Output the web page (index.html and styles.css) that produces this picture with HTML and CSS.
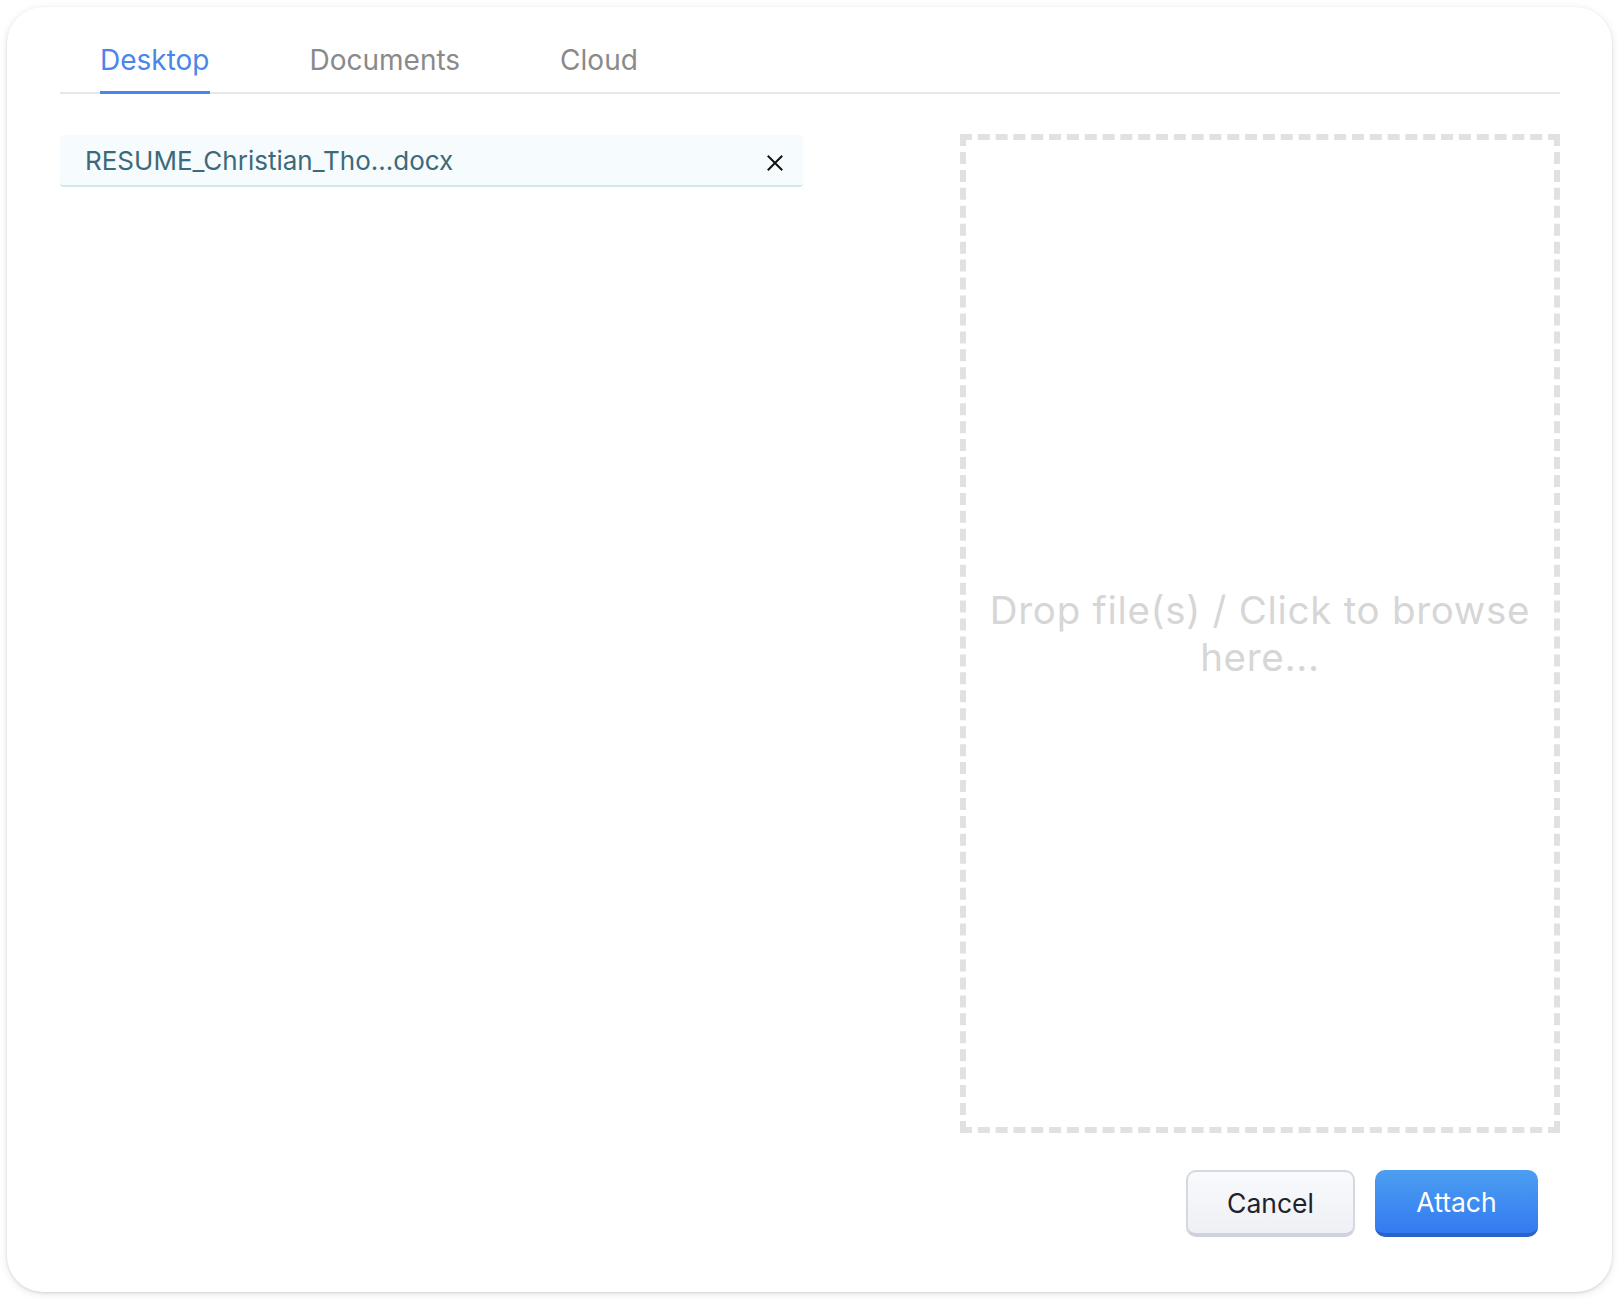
FILE: index.html
```html
<!DOCTYPE html>
<html lang="en">
<head>
<meta charset="utf-8">
<title>Attach files</title>
<link rel="stylesheet" href="styles.css">
</head>
<body>
<div class="dialog">
  <div class="tabs">
    <div class="tab active">Desktop</div>
    <div class="tab">Documents</div>
    <div class="tab">Cloud</div>
  </div>
  <div class="content">
    <div class="files">
      <div class="file">
        <span class="file-name">RESUME_Christian_Tho...docx</span>
        <svg class="file-remove" width="16" height="16" viewBox="0 0 16 16"><path d="M1.5 1.5 L14.5 14.5 M14.5 1.5 L1.5 14.5" stroke="#111" stroke-width="2" stroke-linecap="square" fill="none"/></svg>
      </div>
    </div>
    <div class="dropzone">
      <div class="drop-text">Drop file(s) / Click to browse here...</div>
    </div>
  </div>
  <div class="actions">
    <button class="btn btn-cancel">Cancel</button>
    <button class="btn btn-attach">Attach</button>
  </div>
</div>
</body>
</html>
```
FILE: styles.css
```css
html, body {
  margin: 0;
  padding: 0;
  background: #ffffff;
}
body {
  font-family: Inter, "Noto Sans", "Liberation Sans", sans-serif;
}
.dialog {
  box-sizing: border-box;
  margin: 7px;
  width: 1605px;
  height: 1285px;
  padding: 36px 52px 55px 53px;
  background: #fff;
  border-radius: 36px;
  box-shadow: 0 1px 3px rgba(0,0,0,0.12), 0 2px 10px rgba(0,0,0,0.09);
  display: flex;
  flex-direction: column;
}
.tabs {
  display: flex;
  gap: 100px;
  padding-left: 40px;
  border-bottom: 2px solid #e7e7e7;
}
.tab {
  font-size: 28px;
  line-height: 34px;
  color: #8a8a8a;
  padding-bottom: 14px;
  border-bottom: 3px solid transparent;
  margin-bottom: -2px;
}
.tab.active {
  color: #4a86e8;
  border-bottom-color: #4a86e8;
}
.content {
  flex: 1;
  display: flex;
  justify-content: space-between;
  margin-top: 40px;
  min-height: 0;
}
.files {
  width: 743px;
  padding-top: 1px;
}
.file {
  display: flex;
  align-items: center;
  justify-content: space-between;
  height: 50px;
  padding: 0 20px 0 25px;
  background: #f6fcfd;
  border-bottom: 2px solid #d4e6ea;
  border-radius: 4px;
}
.file-name {
  font-size: 26px;
  color: #3d6a7b;
}
.file-remove {
  display: block;
  margin-top: 5px;
}
.dropzone {
  box-sizing: border-box;
  width: 600px;
  border: 6px dashed #e1e1e1;
  display: flex;
  align-items: center;
  justify-content: center;
  padding: 0 14px;
}
.drop-text {
  font-size: 38.5px;
  line-height: 47px;
  letter-spacing: 0.7px;
  color: #d6d6d6;
  text-align: center;
}
.actions {
  display: flex;
  justify-content: flex-end;
  gap: 20px;
  margin-top: 37px;
  padding-right: 22px;
}
.btn {
  box-sizing: border-box;
  height: 67px;
  border-radius: 10px;
  font-family: Inter, "Noto Sans", "Liberation Sans", sans-serif;
  font-size: 26.5px;
  padding: 0;
}
.btn-cancel {
  width: 169px;
  color: #1f2329;
  background: linear-gradient(#f9fafd, #eef0f5);
  border: 2px solid #d5d8e0;
  border-bottom: 4px solid #cfd2dc;
}
.btn-attach {
  width: 163px;
  color: #fff;
  background: linear-gradient(#4b9ff0, #347af2);
  border: none;
  border-bottom: 4px solid #2c63c9;
}
```
